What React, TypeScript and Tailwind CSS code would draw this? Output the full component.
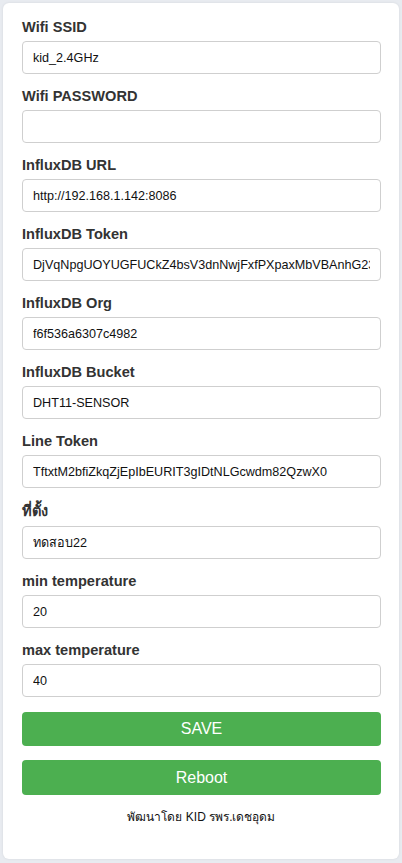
import React from "react";

const fields: { label: string; value: string; thai?: boolean }[] = [
  { label: "Wifi SSID", value: "kid_2.4GHz" },
  { label: "Wifi PASSWORD", value: "" },
  { label: "InfluxDB URL", value: "http://192.168.1.142:8086" },
  { label: "InfluxDB Token", value: "DjVqNpgUOYUGFUCkZ4bsV3dnNwjFxfPXpaxMbVBAnhG23K8sdfP" },
  { label: "InfluxDB Org", value: "f6f536a6307c4982" },
  { label: "InfluxDB Bucket", value: "DHT11-SENSOR" },
  { label: "Line Token", value: "TftxtM2bfiZkqZjEpIbEURIT3gIDtNLGcwdm82QzwX0" },
  { label: "ที่ตั้ง", value: "ทดสอบ22", thai: true },
  { label: "min temperature", value: "20" },
  { label: "max temperature", value: "40" },
];

export default function App() {
  return (
    <div
      className="min-h-[863px] w-[402px] bg-[#e8ebf0] pt-[3px]"
      style={{ fontFamily: '"Liberation Sans", Arial, "Noto Sans", sans-serif' }}
    >
      <div className="ml-[3px] h-[856px] w-[396px] rounded-[6px] bg-white pl-[19px] pr-[18px] pt-[15px] shadow-[0_0_3px_rgba(0,0,0,0.08)]">
        {fields.map((f, i) => (
          <div key={i} className={i === 0 ? "" : "mt-[13px]"}>
            <div
              className={
                "mb-[5px] text-[14.6px] font-bold text-[#333] " +
                (f.thai ? "h-[20px] leading-[20px]" : "h-[18px] leading-[18px]")
              }
            >
              {f.label}
            </div>
            <input
              readOnly
              value={f.value}
              className="box-border block h-[33px] w-full rounded-[4px] border border-[#cfcfcf] bg-white px-[10px] text-[12.6px] text-[#111] outline-none"
              style={{ fontFamily: '"Liberation Sans", Arial, "Noto Sans", sans-serif' }}
            />
          </div>
        ))}
        <button className="mt-[15px] block h-[34px] w-full rounded-[4px] bg-[#4caf50] text-[16px] text-white">
          SAVE
        </button>
        <button className="mt-[14px] block h-[35px] w-full rounded-[4px] bg-[#4caf50] text-[16px] text-white">
          Reboot
        </button>
        <div className="mt-[14px] text-center text-[12px] leading-[16px] text-[#111]">
          พัฒนาโดย KID รพร.เดชอุดม
        </div>
      </div>
    </div>
  );
}
